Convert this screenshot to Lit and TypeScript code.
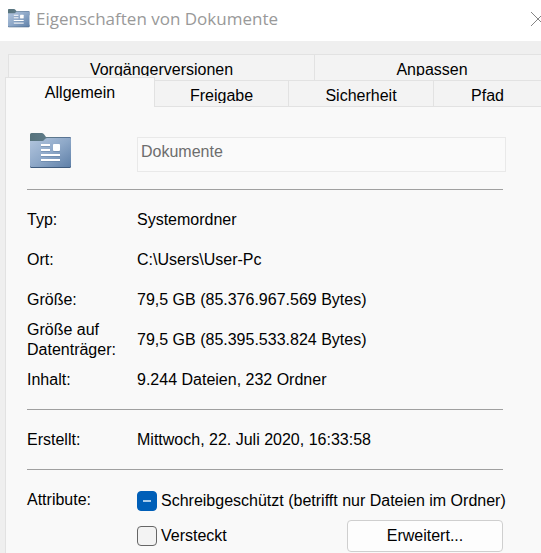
import { LitElement, html, css, svg } from "lit";
import { customElement, property, state } from "lit/decorators.js";
import { classMap } from "lit/directives/class-map.js";

@customElement("folder-icon")
class FolderIcon extends LitElement {
  static styles = css`
    :host { display: block; }
    svg { display: block; width: 100%; height: auto; }
  `;
  render() {
    return html`<svg viewBox="0 0 42 36" aria-hidden="true">
      ${svg`
      <defs>
        <linearGradient id="front" x1="0" y1="0" x2="1" y2="1">
          <stop offset="0" stop-color="#b3c6de" />
          <stop offset="0.5" stop-color="#8ea8c8" />
          <stop offset="1" stop-color="#5f80a8" />
        </linearGradient>
        <linearGradient id="back" x1="0" y1="0" x2="1" y2="0">
          <stop offset="0" stop-color="#56727b" />
          <stop offset="0.35" stop-color="#5d7986" />
          <stop offset="1" stop-color="#587397" />
        </linearGradient>
      </defs>
      <path fill="url(#back)" d="M0 1.500Q0 0 1.500 0H11.500Q13 0 14 1.200L16 4H40Q41 4 41 5V12H0Z" />
      <path fill="#3f5b7d" d="M0 30H41V33.500Q41 35 39.500 35H1.500Q0 35 0 33.500Z" />
      <path fill="url(#front)" d="M0 8H12Q13.500 8 14.500 6.500Q15.500 5 17 5H40Q41 5 41 6V32.500Q41 34 39.500 34H1.500Q0 34 0 32.500Z" />
      <g fill="#4d6c92" opacity="0.35">
        <rect x="11" y="12" width="9" height="2" /><rect x="11" y="17" width="9" height="2" />
        <rect x="11" y="22" width="19" height="2" /><rect x="11" y="27" width="19" height="2" />
        <rect x="23" y="12" width="7" height="7" rx="1" />
      </g>
      <g fill="#fff">
        <rect x="11" y="11" width="9" height="2" /><rect x="11" y="16" width="9" height="2" />
        <rect x="11" y="21" width="19" height="2" /><rect x="11" y="26" width="19" height="2" />
        <rect x="23" y="11" width="7" height="7" rx="1" />
      </g>`}
    </svg>`;
  }
}

@customElement("property-row")
class PropertyRow extends LitElement {
  @property() label = "";
  @property() value = "";
  static styles = css`
    :host {
      display: grid;
      grid-template-columns: 110px 1fr;
      align-items: center;
      min-height: 40px;
      line-height: 20px;
    }
    .label { max-width: 100px; }
    .value { white-space: nowrap; }
  `;
  render() {
    return html`<span class="label">${this.label}</span><span class="value">${this.value}</span>`;
  }
}

@customElement("app-root")
class AppRoot extends LitElement {
  @state() private active = "Allgemein";

  static styles = css`
    :host {
      display: flex;
      flex-direction: column;
      min-height: 100vh;
      box-sizing: border-box;
      overflow: hidden;
      background: #efefef;
      color: #000;
      font: 16px/20px "Liberation Sans", Arial, sans-serif;
    }
    button, input { font: inherit; color: inherit; margin: 0; box-sizing: border-box; }
    .titlebar {
      display: flex;
      align-items: center;
      height: 41px;
      padding: 0 0 4px 8px;
      box-sizing: border-box;
      background: #fff;
    }
    .titlebar folder-icon { width: 22px; margin-right: 6px; }
    .title {
      flex: 1;
      margin: 0;
      font: 17px/24px "Open Sans", "Segoe UI", sans-serif;
      color: #999;
      white-space: nowrap;
    }
    .close {
      width: 16px;
      height: 16px;
      margin-right: -5px;
      padding: 0;
      border: 0;
      background: none;
    }
    .close svg { display: block; }
    .tabs { padding-top: 13px; }
    .row { display: grid; }
    .upper { grid-template-columns: 307fr 235fr; margin: 0 -9px 0 8px; }
    .lower {
      grid-template-columns: 150fr 134fr 145fr 108fr;
      align-items: end;
      margin: -4px -1px 0 5px;
    }
    .tab {
      height: 27px;
      padding: 0;
      border: 1px solid #e2e2e2;
      border-left-width: 0;
      background: #f3f3f3;
      white-space: nowrap;
      overflow: hidden;
    }
    .upper .tab:first-child { border-left-width: 1px; }
    .label { display: block; height: 17px; overflow: hidden; }
    .upper .label { height: 16px; margin-bottom: 4px; padding-top: 4px; }
    .lower .label { padding-top: 2px; }
    .tab.active {
      position: relative;
      height: 30px;
      border-left-width: 1px;
      border-bottom: 0;
      background: #f9f9f9;
    }
    .lower .active .label { height: 24px; padding-top: 4px; }
    .panel {
      flex: 1;
      margin-left: 5px;
      padding: 26px 38px 0 21px;
      border-left: 1px solid #e2e2e2;
      background: #f9f9f9;
    }
    .head { display: grid; grid-template-columns: 110px 1fr; padding: 4px 0 17px; }
    .head folder-icon { width: 42px; margin: -4px 0 0 3px; }
    .name {
      width: calc(100% + 3px);
      height: 35px;
      padding: 0 3px 5px;
      border: 1px solid #e9e9e9;
      background: #fafafa;
      color: #6d6d6d;
      outline: none;
    }
    .group { padding: 10px 0 9px; border-top: 1px solid #a0a0a0; }
    .attributes {
      display: grid;
      grid-template-columns: 110px minmax(0, 1fr);
      padding-top: 20px;
      border-top: 1px solid #a0a0a0;
    }
    .options { display: flex; flex-direction: column; gap: 9px; padding-top: 1px; }
    .line { display: flex; align-items: center; justify-content: space-between; }
    .check { display: flex; align-items: center; gap: 4px; white-space: nowrap; }
    .box {
      appearance: none;
      flex: none;
      width: 20px;
      height: 20px;
      border: 1px solid #666;
      border-radius: 4px;
      background: #f3f3f3;
    }
    .box:indeterminate {
      border-color: #005fb8;
      background: linear-gradient(#a9cbea, #a9cbea) center / 8px 2px no-repeat #005fb8;
    }
    .box:checked { border-color: #005fb8; background: #005fb8; }
    .more {
      width: 156px;
      height: 32px;
      border: 1px solid #cfcfcf;
      border-radius: 4px;
      background: #fdfdfd;
    }
  `;

  private tab(name: string) {
    const on = name === this.active;
    return html`<button role="tab" aria-selected=${on ? "true" : "false"}
      class=${classMap({ tab: true, active: on })}
      @click=${() => (this.active = name)}><span class="label">${name}</span></button>`;
  }

  render() {
    return html`
      <header class="titlebar">
        <folder-icon></folder-icon>
        <h1 class="title">Eigenschaften von Dokumente</h1>
        <button class="close" aria-label="Schließen">
          <svg width="16" height="16" viewBox="0 0 16 16"><path d="M1 1 15 15M15 1 1 15" stroke="#858585" fill="none" /></svg>
        </button>
      </header>
      <nav class="tabs" role="tablist">
        <div class="row upper">${["Vorgängerversionen", "Anpassen"].map((t) => this.tab(t))}</div>
        <div class="row lower">${["Allgemein", "Freigabe", "Sicherheit", "Pfad"].map((t) => this.tab(t))}</div>
      </nav>
      <main class="panel">
        <div class="head">
          <folder-icon></folder-icon>
          <input class="name" type="text" aria-label="Name" .value=${"Dokumente"} readonly />
        </div>
        <section class="group">
          <property-row label="Typ:" value="Systemordner"></property-row>
          <property-row label="Ort:" value="C:\\Users\\User-Pc"></property-row>
          <property-row label="Größe:" value="79,5 GB (85.376.967.569 Bytes)"></property-row>
          <property-row label="Größe auf Datenträger:" value="79,5 GB (85.395.533.824 Bytes)"></property-row>
          <property-row label="Inhalt:" value="9.244 Dateien, 232 Ordner"></property-row>
        </section>
        <section class="group">
          <property-row label="Erstellt:" value="Mittwoch, 22. Juli 2020, 16:33:58"></property-row>
        </section>
        <section class="attributes">
          <span>Attribute:</span>
          <div class="options">
            <label class="check"><input class="box" type="checkbox" .indeterminate=${true} />Schreibgeschützt (betrifft nur Dateien im Ordner)</label>
            <div class="line">
              <label class="check"><input class="box" type="checkbox" />Versteckt</label>
              <button class="more">Erweitert...</button>
            </div>
          </div>
        </section>
      </main>
    `;
  }
}
